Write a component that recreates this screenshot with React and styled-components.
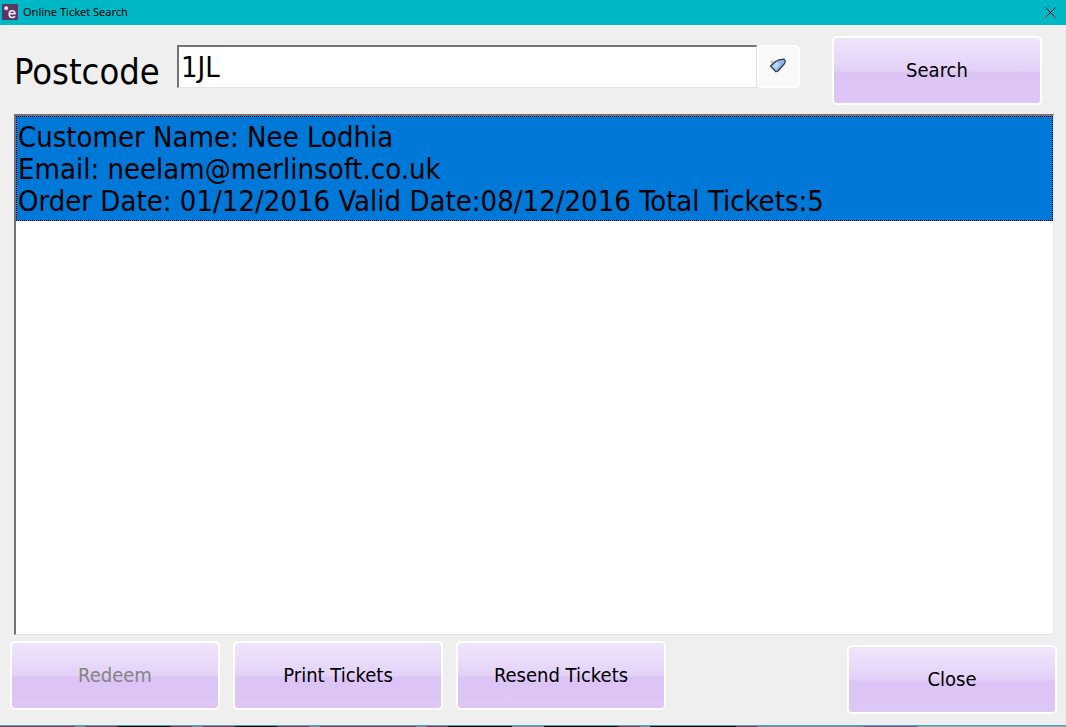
import React, { useState } from "react";
import styled, { createGlobalStyle } from "styled-components";

const App = () => {
  const [postcode, setPostcode] = useState("1JL");
  const [selected, setSelected] = useState(0);

  const orders = [
    {
      name: "Nee Lodhia",
      email: "neelam@merlinsoft.co.uk",
      orderDate: "01/12/2016",
      validDate: "08/12/2016",
      tickets: 5,
    },
  ];

  const onSubmitHandler = (event) => {
    event.preventDefault();
    setSelected(0);
  };

  return (
    <>
      <GlobalStyle />
      <StWindow>
        <StTitleBar>
          <AppIcon />
          <StTitle>Online Ticket Search</StTitle>
          <StCloseIcon type="button" aria-label="Close window">
            <svg width="11" height="11" viewBox="0 0 11 11">
              <path d="M0.5 0.5L10.5 10.5M10.5 0.5L0.5 10.5" stroke="#000" fill="none" />
            </svg>
          </StCloseIcon>
        </StTitleBar>

        <StSearchForm onSubmit={onSubmitHandler}>
          <StLabel htmlFor="postcode">Postcode</StLabel>
          <StField>
            <StInput
              id="postcode"
              value={postcode}
              onChange={(event) => setPostcode(event.target.value)}
            />
            <StClear type="button" aria-label="Clear" onClick={() => setPostcode("")}>
              <EraserIcon />
            </StClear>
          </StField>
          <StButton type="submit">Search</StButton>
        </StSearchForm>

        <StList>
          {orders.map((order, i) => (
            <StOrder
              key={order.email}
              type="button"
              $selected={selected === i}
              onClick={() => setSelected(i)}
            >
              <StLine>Customer Name: {order.name}</StLine>
              <StLine>Email: {order.email}</StLine>
              <StLine>
                Order Date: {order.orderDate} Valid Date:{order.validDate} Total Tickets:{order.tickets}
              </StLine>
            </StOrder>
          ))}
        </StList>

        <StFooter>
          <StActions>
            <StButton type="button" disabled>Redeem</StButton>
            <StButton type="button">Print Tickets</StButton>
            <StButton type="button">Resend Tickets</StButton>
          </StActions>
          <StButton type="button">Close</StButton>
        </StFooter>
        <StBottomEdge />
      </StWindow>
    </>
  );
};

export default App;

const AppIcon = () => (
  <StAppIcon>
    <svg width="16" height="16" viewBox="0 0 16 16">
      <rect width="16" height="16" rx="1" fill="#5b3468" />
      <circle cx="4.2" cy="4.2" r="1.6" fill="#fff" />
      <path d="M4.2 2v4.400M2.200 3.100l4 2.200M6.200 3.100l-4 2.200" stroke="#fff" strokeWidth="0.8" />
      <path d="M7.200 9.800h5.800c0-2-1.200-3-2.900-3S7.200 8 7.200 10.200s1.300 3.300 3.100 3.300c1.200 0 2-.4 2.600-1.200" stroke="#f6ecf8" strokeWidth="1.600" fill="none" />
    </svg>
  </StAppIcon>
);

const EraserIcon = () => (
  <svg width="18" height="16" viewBox="0 0 18 16">
    <path d="M1.500 4.500l3-1.500M2.500 2.500l1 3.500" stroke="#c9bf8a" strokeWidth="1.200" />
    <path d="M1.500 8L6.500 3.500 10 1.800l5-.6 1.300 1.800-.8 2.500-6.500 7.500-2 .8z" fill="#8fb9e8" stroke="#24384f" strokeWidth="1.200" strokeLinejoin="round" />
    <path d="M3.500 8L8 4l3 2-4 5.500z" fill="#b9d8f8" />
  </svg>
);

const GlobalStyle = createGlobalStyle`
  * {
    box-sizing: border-box;
  }
  body {
    margin: 0;
    background: #efefef;
    color: #000;
    font-family: Tahoma, "DejaVu Sans Condensed", "Noto Sans", sans-serif;
  }
  button, input {
    font-family: inherit;
    color: inherit;
  }
`;

const StWindow = styled.div`
  display: flex;
  flex-direction: column;
  min-height: 100vh;
`;

const StTitleBar = styled.header`
  display: flex;
  align-items: center;
  height: 25px;
  padding: 0 10px 1px 2px;
  background: #00b7c6;
`;

const StAppIcon = styled.span`
  display: flex;
  margin-right: 5px;
`;

const StTitle = styled.h1`
  flex: 1;
  margin: 0;
  font: 400 11px/16px "Noto Sans", sans-serif;
`;

const StCloseIcon = styled.button`
  display: flex;
  padding: 0;
  border: none;
  background: none;
`;

const StSearchForm = styled.form`
  display: flex;
  align-items: flex-start;
  padding: 11px 24px 9px 14px;
`;

const StLabel = styled.label`
  width: 163px;
  padding-top: 14px;
  font-size: 36px;
  line-height: 44px;
`;

const StField = styled.div`
  flex: 1;
  display: flex;
  margin: 9px 32px 0 0;
`;

const StInput = styled.input`
  flex: 1;
  min-width: 0;
  height: 43px;
  padding: 0 2px;
  border: 2px solid;
  border-color: #747474 #e3e3e3 #e3e3e3 #747474;
  border-right-width: 1px;
  border-bottom-width: 1px;
  background: #fff;
  font-size: 29px;
  outline: none;
`;

const StClear = styled.button`
  display: flex;
  align-items: center;
  justify-content: center;
  width: 43px;
  height: 43px;
  padding: 0 2px 1px 0;
  border: 2px solid #fff;
  border-radius: 5px;
  background: #f9f9f9;
`;

const StButton = styled.button`
  flex: none;
  width: 210px;
  height: 69px;
  padding: 0 0 2px;
  border: 2px solid #fff;
  border-radius: 5px;
  background: linear-gradient(#f0e6fb, #e3d1f7 50%, #dcc3f5 53%, #dec6f7);
  font-size: 20px;

  &:disabled {
    color: #838383;
  }
`;

const StList = styled.main`
  flex: 1;
  margin: 0 12px 0 14px;
  border: 2px solid;
  border-color: #747474 #e3e3e3 #e3e3e3 #747474;
  border-right-width: 1px;
  border-bottom-width: 1px;
  background: #fff;
`;

const StOrder = styled.button`
  display: block;
  width: 100%;
  padding: 4px 1px 3px;
  border: 1px dotted ${({ $selected }) => ($selected ? "#000" : "transparent")};
  background: ${({ $selected }) => ($selected ? "#0078d7" : "#fff")};
  text-align: left;
`;

const StLine = styled.span`
  display: block;
  font-size: 29px;
  line-height: 32px;
`;

const StFooter = styled.footer`
  display: flex;
  align-items: flex-end;
  justify-content: space-between;
  padding: 6px 9px 11px 10px;
`;

const StActions = styled.div`
  display: flex;
  gap: 13px;
  padding-bottom: 4px;
`;

// sliver of the till screen showing under the window
const StBottomEdge = styled.div`
  height: 2px;
  border-top: 1px solid #4fa3b5;
  background: linear-gradient(
    90deg,
    #7a3a5c 0 7%, #7f86a8 7% 8%, #7a3a5c 8% 11%, #14090f 11% 16%,
    #7a3a5c 16% 18%, #7f86a8 18% 19%, #7a3a5c 19% 22%, #14090f 22% 26%,
    #7a3a5c 26% 29%, #7f86a8 29% 30%, #7a3a5c 30% 39%, #7f86a8 39% 40%,
    #7a3a5c 40% 42%, #14090f 42% 48%, #7f86a8 48% 51%, #14090f 51% 58%,
    #7a3a5c 58% 60%, #7f86a8 60% 61%, #14090f 61% 69%, #7a3a5c 69% 71%,
    #7f86a8 71% 81%, #6d5590 81% 86%, #8fabb0 86% 100%
  );
`;
